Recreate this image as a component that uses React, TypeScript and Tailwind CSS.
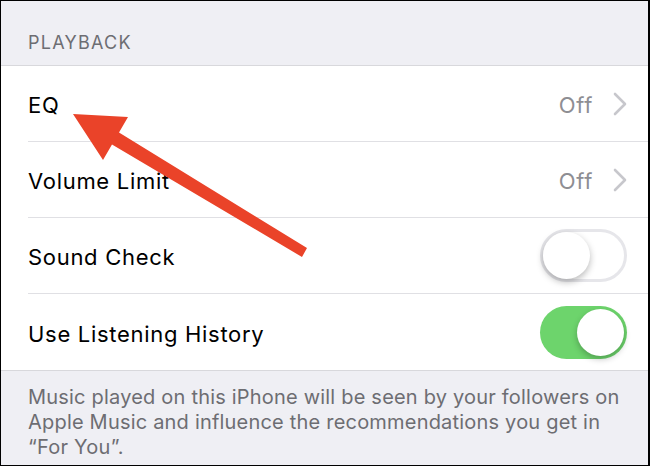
import React from "react";

function Chevron() {
  return (
    <svg width="14" height="24" viewBox="0 0 14 24" className="ml-[20px]">
      <polyline points="2,2 12,12 2,22" fill="none" stroke="#c7c7cc" strokeWidth="2.6" strokeLinecap="round" strokeLinejoin="round" />
    </svg>
  );
}

function Toggle({ on }: { on: boolean }) {
  if (on) {
    return (
      <div className="relative h-[53px] w-[87px] rounded-full bg-[#6dd46c]">
        <div className="absolute right-[3px] top-[3px] h-[47px] w-[47px] rounded-full bg-white shadow-[0_3px_6px_rgba(0,0,0,0.25)]" />
      </div>
    );
  }
  return (
    <div className="relative h-[53px] w-[87px] rounded-full border-[3px] border-[#e6e6ea] bg-white">
      <div className="absolute left-0 top-0 h-[47px] w-[47px] rounded-full bg-white shadow-[0_3px_7px_rgba(0,0,0,0.28)]" />
    </div>
  );
}

function Row({ label, value, toggle, last }: { label: string; value?: string; toggle?: boolean; last?: boolean }) {
  return (
    <div className="pl-[27px]">
      <div className={`flex h-[76px] items-center pr-[21px] ${last ? "" : "border-b border-[#e0e0e4]"}`}>
        <span className="flex-1 pt-[4px] text-[22px] tracking-[0.7px] text-black">{label}</span>
        {value !== undefined && (
          <div className="flex items-center">
            <span className="pt-[4px] text-[22px] tracking-[0.7px] text-[#8e8e93]">{value}</span>
            <Chevron />
          </div>
        )}
        {toggle !== undefined && <Toggle on={toggle} />}
      </div>
    </div>
  );
}

export default function App() {
  return (
    <div className="relative h-[466px] w-[650px] overflow-hidden border-b border-l border-r-2 border-t border-black bg-[#efeff4] font-['Inter',sans-serif]">
      <div className="flex h-[65px] items-end border-b border-[#d8d8dc] pb-[9px] pl-[27px]">
        <span className="text-[18px] tracking-[0.07em] text-[#6d6d72]">PLAYBACK</span>
      </div>
      <div className="border-b border-[#d8d8dc] bg-white">
        <Row label="EQ" value="Off" />
        <Row label="Volume Limit" value="Off" />
        <Row label="Sound Check" toggle={false} />
        <Row label="Use Listening History" toggle={true} last />
      </div>
      <p className="pl-[27px] pr-[14px] pt-[14px] text-[20px] leading-[25px] tracking-[0.2px] text-[#6d6d72]">
        Music played on this iPhone will be seen by your followers on Apple Music and influence the recommendations you get in “For You”.
      </p>
      <svg className="pointer-events-none absolute left-[-1px] top-[-1px]" width="650" height="466" viewBox="0 0 650 466">
        <polygon
          points="73,114 128,117 119,132.5 307,248 302,257 112,144.5 103,160"
          fill="#ea4329"
        />
      </svg>
    </div>
  );
}
